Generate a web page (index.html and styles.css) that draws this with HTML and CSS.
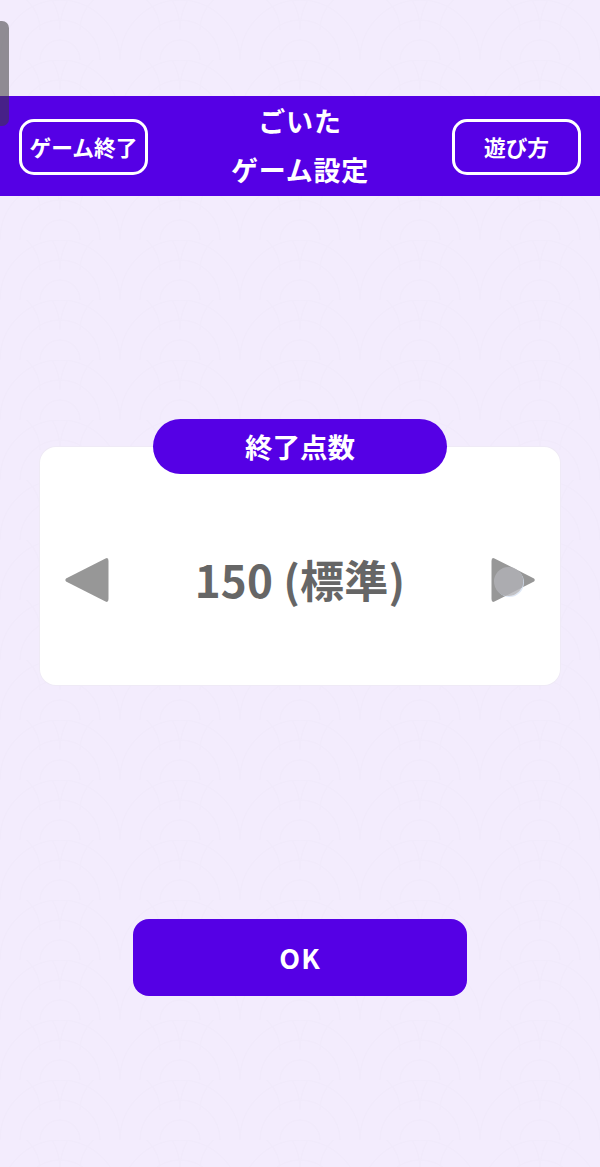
FILE: index.html
```html
<!DOCTYPE html>
<html lang="ja">
<head>
<meta charset="utf-8">
<title>ごいた ゲーム設定</title>
<link rel="stylesheet" href="styles.css">
</head>
<body>
<div class="scroll-handle"></div>
<main class="screen">
  <header class="topbar">
    <button class="bar-btn">ゲーム終了</button>
    <div class="titles">
      <div class="title-line">ごいた</div>
      <div class="title-line">ゲーム設定</div>
    </div>
    <button class="bar-btn">遊び方</button>
  </header>
  <section class="setting">
    <div class="setting-label">終了点数</div>
    <div class="setting-card">
      <svg class="arrow" width="45" height="46" viewBox="0 0 44 46"><path d="M41 1.500 Q44 0 44 4 V42 Q44 46 41 44.500 L1.500 24.500 Q0 23 1.500 21.500 Z" fill="#979797"/></svg>
      <div class="setting-value">150 (標準)</div>
      <div class="arrow-wrap">
        <svg class="arrow" width="45" height="46" viewBox="0 0 44 46"><path d="M3 1.500 Q0 0 0 4 V42 Q0 46 3 44.500 L42.500 24.500 Q44 23 42.500 21.500 Z" fill="#979797"/></svg>
        <span class="touch-dot"></span>
      </div>
    </div>
  </section>
  <div class="actions"><button class="ok-btn">OK</button></div>
</main>
</body>
</html>
```
FILE: styles.css
```css
* { box-sizing: border-box; }
html, body { margin: 0; height: 100%; }
body {
  width: 600px;
  height: 1167px;
  overflow: hidden;
  position: relative;
  font-family: "Noto Sans CJK JP", "Noto Sans", sans-serif;
  background-color: #f3ecfd;
  background-image: url("data:image/svg+xml,%3Csvg xmlns='http://www.w3.org/2000/svg' width='120' height='60'%3E%3Cg fill='none' stroke='%23f1eafb' stroke-width='1.500'%3E%3Cpath d='M0 60a60 60 0 0 1 120 0M20 60a40 40 0 0 1 80 0M40 60a20 20 0 0 1 40 0'/%3E%3Cpath d='M-60 30a60 60 0 0 1 120 0M-40 30a40 40 0 0 1 80 0M60 30a60 60 0 0 1 120 0M80 30a40 40 0 0 1 80 0'/%3E%3C/g%3E%3C/svg%3E");
}
button { font-family: inherit; cursor: pointer; }
.screen { display: flex; flex-direction: column; height: 100%; padding-top: 96px; }
.topbar {
  height: 100px;
  background: #5500e5;
  display: flex;
  align-items: center;
  justify-content: space-between;
  padding: 0 19px;
}
.bar-btn {
  width: 129px;
  height: 56px;
  padding: 0;
  margin-top: 2px;
  background: transparent;
  border: 3px solid #fff;
  border-radius: 15px;
  color: #fff;
  font-size: 21.700px;
  font-weight: 700;
  line-height: 1;
  white-space: nowrap;
}
.titles {
  text-align: center;
  color: #fff;
  font-size: 27px;
  letter-spacing: 0.800px;
  font-weight: 700;
  line-height: 49px;
  margin-top: -3px;
}
.title-line { white-space: nowrap; }
.setting { position: relative; margin: 251px 40px 0; }
.setting-label {
  position: absolute;
  top: -28px;
  left: 113px;
  width: 294px;
  height: 55px;
  border-radius: 28px;
  background: #5500e5;
  color: #fff;
  font-size: 27.500px;
  font-weight: 700;
  display: flex;
  align-items: center;
  justify-content: center;
  padding-bottom: 2px;
  z-index: 1;
}
.setting-card {
  height: 238px;
  background: #fff;
  box-shadow: 0 0 0 1px #efeaf6;
  border-radius: 16px;
  display: flex;
  align-items: center;
  justify-content: space-between;
  padding: 28px 24px 0;
}
.arrow { display: block; }
.arrow-wrap { position: relative; }
.setting-value {
  color: #666;
  font-size: 44px;
  font-weight: 700;
  line-height: 1;
  letter-spacing: 0.200px;
  white-space: nowrap;
  margin-top: -2px;
}
.touch-dot {
  position: absolute;
  left: 3px;
  top: 10px;
  width: 29px;
  height: 29px;
  border-radius: 50%;
  background: rgba(178, 178, 182, 0.8);
  box-shadow: 1px 1px 0 0 rgba(215, 226, 244, 0.8);
}
.actions { display: flex; justify-content: center; margin-top: 234px; }
.ok-btn {
  width: 334px;
  height: 77px;
  border: 0;
  border-radius: 16px;
  background: #5500e5;
  color: #fff;
  font-size: 27px;
  font-weight: 700;
  letter-spacing: 1px;
}
.scroll-handle {
  position: absolute;
  left: 0;
  top: 21px;
  width: 9px;
  height: 105px;
  border-radius: 0 7px 7px 0;
  background: rgba(60, 60, 60, 0.55);
  z-index: 2;
}
```
